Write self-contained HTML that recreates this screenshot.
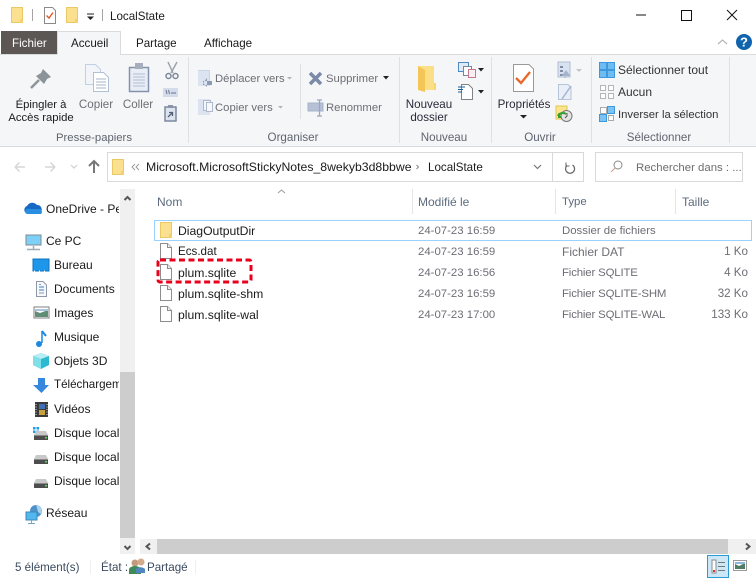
<!DOCTYPE html>
<html lang="fr"><head><meta charset="utf-8"><title>LocalState</title>
<style>
html,body{margin:0;padding:0;background:#fff}
#w{position:relative;width:756px;height:579px;overflow:hidden;background:#fff;font:11.6px/16px "Liberation Sans",sans-serif;color:#1a1a1a}
#w div,#w svg{position:absolute}
.t{white-space:nowrap;height:16px;margin-top:1px}
.g{color:#6d6d75}
.c{text-align:center}
.m{color:#5f6470}
.r{text-align:right;width:60px;left:688px;margin-top:0}
.n{font-size:12px;margin-top:0}
.f{font-size:12.2px;margin-top:0}
.d{font-size:11.4px;margin-top:0}
.s{font-size:11.4px;letter-spacing:-.15px;margin-top:0}
.b{font-size:11.3px;margin-top:1px}
</style></head><body><div id="w">
<svg width="756" height="579" style="left:0;top:0">
<defs>
<g id="fo"><path d="M.5.5H11.5V15.5H.5Z" fill="#fbe08f" stroke="#e9c964"/><path d="M9 12h3v4H9z" fill="#f3cf6d"/></g>
<g id="fi"><path d="M.5.5H7.5L11.5 4.5V15.5H.5Z" fill="#fff" stroke="#8d8d8d"/><path d="M7.5.5V4.5H11.5" fill="#eee" stroke="#8d8d8d"/></g>
<g id="hd"><path d="M2 5 4 1H14L16 5V10H2Z" fill="#c9c9c9"/><path d="M2 5H16V10H2Z" fill="#4d4d4d"/><path d="M2 5H16V6H2Z" fill="#8a8a8a"/><path d="M13 7h2v1.500h-2z" fill="#5fd35f"/></g>
</defs>
<!-- title bar -->
<use href="#fo" x="11" y="7"/>
<path d="M32.500 9V21" stroke="#a5a5a5"/>
<path d="M44.500 7.500H52.500L55.500 10.500V23.500H44.500Z" fill="#fff" stroke="#8a8a8a"/>
<path d="M46.500 15.500 49 18 53 12.500" fill="none" stroke="#e2592a" stroke-width="1.400"/>
<use href="#fo" x="66" y="7"/>
<path d="M87 14H94" stroke="#222" stroke-width="1"/><path d="M87 16.500H94L90.500 20Z" fill="#222"/>
<path d="M102.500 9V21" stroke="#a5a5a5"/>
<path d="M636 15H646" stroke="#111"/><path d="M681.500 10.500H691.500V20.500H681.500Z" fill="none" stroke="#111"/>
<path d="M727 10 737 20M737 10 727 20" stroke="#111" fill="none"/>
<!-- ribbon -->
<path d="M0 54.500H756" stroke="#dadbdc"/>
<rect x="0" y="55" width="756" height="91" fill="#f5f6f7"/>
<path d="M0 146.500H756" stroke="#dadbdc"/>
<rect x="1" y="31" width="57" height="23" fill="#5c5655"/>
<path d="M57.500 55V31.500H120.500V55" fill="#f5f6f7" stroke="#dadbdc"/>
<rect x="58" y="54" width="62" height="2" fill="#f5f6f7"/>
<path d="M188.500 57V143M399.500 57V143M491.500 57V143M591.500 57V143M729.500 57V143" stroke="#dfe0e1"/>
<path d="M300.500 64V119" stroke="#dfe0e1"/>
<path d="M718 44 722.500 40 727 44" fill="none" stroke="#b5b5b5" stroke-width="1.200"/>
<circle cx="744" cy="42" r="8" fill="#0f64ad"/>
<!-- pin -->
<path d="M43 69 51 77 47 79 44 84 36 76 41 73Z" fill="#8c9499"/><path d="M39 80 31 88" stroke="#8c9499" stroke-width="2.500"/>
<!-- copy -->
<path d="M85.500 64.500H95.500L100.500 69.500V84.500H85.500Z" fill="#f1f4f9" stroke="#c3cfe2"/>
<path d="M93.500 72.500H103.500L108.500 77.500V91.500H93.500Z" fill="#fff" stroke="#b2c0d6"/>
<path d="M96 79h10M96 82h10M96 85h10M96 88h10" stroke="#a7b4c9"/>
<!-- paste -->
<rect x="129.500" y="67.500" width="19" height="24" fill="#e8edf6" stroke="#8592ab" stroke-width="1.500"/>
<rect x="135" y="63" width="8" height="6" fill="#a6adbc"/>
<path d="M133 74h12M133 77h12M133 80h12M133 83h12M133 86h12" stroke="#b4c0d5"/>
<!-- scissors -->
<path d="M168 62 173 73M177 62 171 73" stroke="#9ea4ae" stroke-width="1.500"/><circle cx="168.500" cy="76" r="2.500" fill="none" stroke="#7e8899" stroke-width="1.500"/><circle cx="175.500" cy="76" r="2.500" fill="none" stroke="#7e8899" stroke-width="1.500"/>
<rect x="163" y="88" width="15" height="9" fill="#d4dceb"/><path d="M166 90l1 4M168.500 90l1 4M171 93h5" stroke="#68758c"/>
<rect x="165" y="107" width="11" height="14" fill="#dde3ee" stroke="#74829c" stroke-width="1.400"/><rect x="168" y="105" width="5" height="3" fill="#8b94a5"/><path d="M168 117 172 113M169 112.500H172.500V116" stroke="#55617a" fill="none" stroke-width="1.300"/>
<!-- move/copy -->
<rect x="198" y="70" width="12" height="16" fill="#dce4f2"/><path d="M198.500 70.500H209.500V86" fill="none" stroke="#c9d3e6"/><path d="M203 81H212V85H203M207 78 203 83 207 87Z" fill="#8d9bb2"/>
<path d="M287 77H292L289.500 79.500Z" fill="#b2b2b2"/>
<rect x="198" y="99" width="12" height="16" fill="#dce4f2"/><rect x="203.500" y="100.500" width="7" height="10" fill="#f2f5fa" stroke="#aeb9cd"/><rect x="206.500" y="102.500" width="6" height="9" fill="#f7f8fb" stroke="#aeb9cd"/>
<path d="M278 106H283L280.500 108.500Z" fill="#b2b2b2"/>
<!-- delete -->
<path d="M310 73 321 84M321 73 310 84" stroke="#7b8aa8" stroke-width="3.500"/>
<path d="M383 76H389L386 79.500Z" fill="#222"/>
<rect x="308" y="103" width="15" height="8" fill="#b6c1d6" stroke="#a7b2c8"/><path d="M319.500 100V116M317 100H322M317 116H322" stroke="#9aa7c0" stroke-width="1.300"/>
<!-- new folder -->
<path d="M418 66H434V90H418Z" fill="#fbdf87"/><path d="M418 66 425 70V92L418 90Z" fill="#f3c657"/><rect x="434" y="83" width="2" height="7" fill="#f7d56f"/>
<rect x="458.500" y="62.500" width="10" height="9" fill="#e3eaf5" stroke="#4b8bc2"/><rect x="463.500" y="66.500" width="8" height="9" fill="#fff" stroke="#7a8699"/><rect x="468.500" y="69.500" width="7" height="8" fill="#fbeef0" stroke="#c2788d"/>
<path d="M478 68H484L481 71.500Z M478 90H484L481 93.500Z" fill="#222"/>
<path d="M461.500 84.500H468.500L472.500 88.500V99.500H461.500Z" fill="#fff" stroke="#838383"/><path d="M458 87H465M458 89.500H463M458 92H462" stroke="#1d5c94"/>
<!-- properties -->
<path d="M513.500 64.500H529L533.500 69V91.500H513.500Z" fill="#fff" stroke="#9a9a9a"/><path d="M516 78 521 83 530 72" fill="none" stroke="#e9692c" stroke-width="2.400"/>
<path d="M520 115H527L523.500 118.500Z" fill="#222"/>
<rect x="558" y="62" width="12" height="15" fill="#d9e2f1" stroke="#b3c0d6"/><path d="M560 66h3v2h-3zM560 70h3v2h-3zM560 74h3v2h-3z" fill="#7f8da6"/><path d="M565 78V73M562.500 75.500 566 71 569.500 75.500Z" fill="#a6b3c9" stroke="#a6b3c9"/><path d="M576 69H582L579 72Z" fill="#c5c5c5"/>
<path d="M558.500 84.500H568L571 87.500V99.500H558.500Z" fill="#e9eef7" stroke="#b6c3d9"/><path d="M562 99 571 86" stroke="#a3b5d3" stroke-width="1.500"/>
<rect x="556" y="106" width="11" height="13" fill="#fbe48e" stroke="#e6c650"/><circle cx="566.500" cy="116" r="5.500" fill="#e4e4e4" stroke="#777"/><path d="M558 116a5 4 0 0 1 8-2" fill="none" stroke="#30a030" stroke-width="2"/><path d="M558 113v5h4" fill="#2f9e2f"/><path d="M567 113v3l-2 2" fill="none" stroke="#555"/>
<!-- select -->
<g fill="#6fbcf0" stroke="#3c99e0"><rect x="599.500" y="62.500" width="7" height="7"/><rect x="607.500" y="62.500" width="7" height="7"/><rect x="599.500" y="70.500" width="7" height="7"/><rect x="607.500" y="70.500" width="7" height="7"/></g>
<g fill="#fff" stroke="#b5b5b5"><rect x="600.500" y="85.500" width="5" height="5"/><rect x="608.500" y="85.500" width="5" height="5"/><rect x="600.500" y="93.500" width="5" height="5"/><rect x="608.500" y="93.500" width="5" height="5"/></g>
<rect x="600.500" y="107.500" width="6" height="6" fill="#fff" stroke="#aaa"/><rect x="607.500" y="106.500" width="7" height="7" fill="#7cc3f3" stroke="#3c99e0"/><rect x="599.500" y="114.500" width="7" height="7" fill="#7cc3f3" stroke="#3c99e0"/><rect x="608.500" y="115.500" width="5" height="5" fill="#fff" stroke="#aaa"/>
<!-- nav -->
<path d="M15 167H25M15 167 19.500 162.500M15 167 19.500 171.500M45 167H55M55 167 50.500 162.500M55 167 50.500 171.500" stroke="#d6d6d6" fill="none" stroke-width="1.500"/>
<path d="M71 165 74 168 77 165" stroke="#d0d0d0" fill="none" stroke-width="1.200"/>
<path d="M94 173V161M89 166 94 161 99 166" stroke="#777" fill="none" stroke-width="2"/>
<rect x="107.500" y="152.500" width="476" height="29" fill="#fff" stroke="#d9d9d9"/><path d="M552.500 152V182" stroke="#d9d9d9"/>
<rect x="595.500" y="152.500" width="147" height="29" fill="#fff" stroke="#d9d9d9"/>
<use href="#fo" x="112" y="159"/>
<path d="M135 164 132 167 135 170M139 164 136 167 139 170" fill="none" stroke="#9b9b9b"/>
<path d="M416.500 165 418.500 167 416.500 169" fill="none" stroke="#888"/>
<path d="M534 165 537.500 168.500 541 165" fill="none" stroke="#777" stroke-width="1.200"/>
<path d="M572.500 165a4.500 4.500 0 1 1-5.500 .5" fill="none" stroke="#666" stroke-width="1.200"/><path d="M566 162.500V166H569.500" fill="none" stroke="#666"/>
<circle cx="618" cy="165" r="4" fill="none" stroke="#8a8a8a"/><path d="M615 168 611 172" stroke="#c9a08a"/>
<!-- left icons -->
<path d="M26 213a4 4 0 0 1 1-7 6 6 0 0 1 10-1 4.500 4.500 0 0 1 3 8Z" fill="#1769c4"/><path d="M25 212a3.500 3.500 0 0 1 5-3h10a3 3 0 0 1 1 5H28a3 3 0 0 1-3-2Z" fill="#2a8fe0"/>
<rect x="26" y="235" width="15" height="10" fill="#7fd0f7" stroke="#7c8d99"/><path d="M33.500 246V249M27 249.500H40" stroke="#a0adb5" stroke-width="1.500"/>
<rect x="33" y="259" width="16" height="12" fill="#1e96ea" stroke="#0f72c0"/><path d="M34 271H48" stroke="#fff" stroke-dasharray="1 4"/>
<path d="M36.500 281.500H43L46.500 285V296.500H36.500Z" fill="#f6f8fb" stroke="#8e98a6"/><path d="M39 287H44M39 290H44" stroke="#3584c9"/><path d="M39 293H44M39 284.500h2" stroke="#8a9ab0"/>
<rect x="34" y="307" width="15" height="11" fill="#fff" stroke="#7f7f7f"/><path d="M35 315V311L40 313 48 310V317H35Z" fill="#5f8d75"/><path d="M35 309H48V311H35Z" fill="#a8c4dc"/>
<path d="M42 331V343" stroke="#1c88e0" stroke-width="1.500"/><path d="M42 331 46 336" stroke="#1c88e0" stroke-width="2"/><circle cx="39" cy="344" r="3" fill="#1c88e0"/>
<path d="M41 353 49 356V365L41 369 33 365V356Z" fill="#2db9cf"/><path d="M41 353 49 356 41 359 33 356Z" fill="#b7eef5"/><path d="M33 356 41 359V369L33 365Z" fill="#7fe0ea"/>
<path d="M38 378H45V385H49L41.500 393 33 385H38Z" fill="#3588dd"/>
<rect x="35" y="402" width="13" height="15" fill="#3a3a3a"/><rect x="39" y="404" width="6" height="5" fill="#3e6fb8"/><rect x="39" y="410" width="6" height="5" fill="#c9a13c"/><path d="M36 404v11M47 404v11" stroke="#ddd" stroke-dasharray="1 1.500"/>
<path d="M33 427h2.500v2.500H33zM36.500 427H39v2.500h-2.500zM33 430.500h2.500V433H33zM36.500 430.500H39V433h-2.500z" fill="#1d9cec"/>
<use href="#hd" x="32" y="430"/><use href="#hd" x="32" y="454"/><use href="#hd" x="32" y="478"/>
<circle cx="36" cy="511" r="6" fill="#4f92c9"/><path d="M36 505a6 6 0 0 1 5 9l-3-2-1-4Z" fill="#a7d3ef"/>
<rect x="26" y="512" width="11" height="8" fill="#53b7ef" stroke="#3a89bd"/><path d="M31.500 520V523M28 523.500H35" stroke="#7aa4c0"/>
<!-- scrollbars -->
<rect x="120" y="189" width="15" height="365" fill="#f0f0f0"/>
<rect x="120" y="372" width="15" height="166" fill="#cdcdcd"/>
<path d="M124.500 200 127.500 197 130.500 200" fill="none" stroke="#555" stroke-width="2"/>
<path d="M124.500 546 127.500 549 130.500 546" fill="none" stroke="#555" stroke-width="2"/>
<rect x="140" y="539" width="616" height="15" fill="#f0f0f0"/>
<rect x="157" y="539" width="571" height="15" fill="#cdcdcd"/>
<path d="M150 543.500 146.500 546.500 150 549.500" fill="none" stroke="#555" stroke-width="2"/>
<path d="M746 543.500 749.500 546.500 746 549.500" fill="none" stroke="#555" stroke-width="2"/>
<!-- header -->
<path d="M412.500 189V214M555.500 189V214M675.500 189V214" stroke="#e5e5e5"/>
<path d="M278 193 281.500 190 285 193" fill="none" stroke="#9b9b9b"/>
<!-- rows -->
<rect x="154.500" y="220.500" width="597" height="20" fill="#fff" stroke="#99d1ff"/>
<use href="#fo" x="160" y="222"/>
<use href="#fi" x="160" y="243"/><use href="#fi" x="160" y="264"/><use href="#fi" x="160" y="285"/><use href="#fi" x="160" y="306"/>
<rect x="158" y="260" width="93" height="22" rx="2" fill="none" stroke="#e8001c" stroke-width="3" stroke-dasharray="6 3.500"/>
<!-- status -->
<path d="M90.500 560V574M195.500 560V574" stroke="#efefef"/>
<circle cx="135" cy="563" r="3.500" fill="#c49a7c"/><path d="M129 574V570A6 4 0 0 1 141 570V574Z" fill="#3f8a58"/>
<circle cx="141" cy="562" r="3.500" fill="#d2ab8c"/><path d="M136 573V569A5.500 4 0 0 1 145 569V573Z" fill="#4f86bf"/>
<rect x="707.500" y="555.500" width="21" height="22" fill="#cce8f6" stroke="#2a9bd0"/>
<rect x="712" y="560" width="4" height="13" fill="#fff" stroke="#8a8a8a"/><path d="M718 562.500h7M718 566.500h7M718 570.500h7" stroke="#777"/><rect x="713" y="570" width="2" height="2" fill="#d33"/>
<rect x="733.500" y="560.500" width="13" height="10" fill="#fff" stroke="#9a9a9a"/><path d="M735 568V564L739 566 745 563V569H735Z" fill="#4f7d63"/><path d="M735 562H745V564H735Z" fill="#8fb5da"/>
<text x="744" y="46.500" text-anchor="middle" font-family="Liberation Sans,sans-serif" font-size="13" font-weight="700" fill="#fff">?</text>
</svg>

<div class="t" style="left:110px;top:8px">LocalState</div>
<div class="t" style="left:12px;top:35px;color:#fff">Fichier</div>
<div class="t" style="left:71px;top:35px">Accueil</div>
<div class="t" style="left:136px;top:35px">Partage</div>
<div class="t" style="left:204px;top:35px">Affichage</div>

<div class="t c b" style="left:1px;width:80px;top:96px">Épingler à</div>
<div class="t c b" style="left:1px;width:80px;top:109px">Accès rapide</div>
<div class="t c g" style="left:69px;width:54px;top:96px">Copier</div>
<div class="t c g" style="left:111px;width:54px;top:96px">Coller</div>
<div class="t c m b" style="left:29px;width:130px;top:129px">Presse-papiers</div>
<div class="t g b" style="left:215px;top:70px">Déplacer vers</div>
<div class="t g b" style="left:215px;top:99px">Copier vers</div>
<div class="t g b" style="left:326px;top:70px">Supprimer</div>
<div class="t g b" style="left:326px;top:99px">Renommer</div>
<div class="t c m" style="left:243px;width:100px;top:129px">Organiser</div>
<div class="t c" style="left:399px;width:60px;top:96px;color:#2a2a3a">Nouveau</div>
<div class="t c" style="left:399px;width:60px;top:109px;color:#2a2a3a">dossier</div>
<div class="t c m" style="left:414px;width:60px;top:129px">Nouveau</div>
<div class="t c" style="left:494px;width:60px;top:96px;color:#2a2a3a">Propriétés</div>
<div class="t c m" style="left:510px;width:60px;top:129px">Ouvrir</div>
<div class="t n" style="left:618px;top:62px;color:#333">Sélectionner tout</div>
<div class="t n" style="left:618px;top:84px;color:#333">Aucun</div>
<div class="t b" style="left:618px;top:106px;color:#333">Inverser la sélection</div>
<div class="t c m" style="left:609px;width:100px;top:129px">Sélectionner</div>

<div class="t" style="left:146px;top:158px;font-size:12.25px;margin-top:1px">Microsoft.MicrosoftStickyNotes_8wekyb3d8bbwe</div>
<div class="t" style="left:428px;top:159px">LocalState</div>
<div class="t d" style="left:636px;top:160px;color:#6d6d6d">Rechercher dans : ...</div>

<div class="t n" style="left:46px;top:201px;width:73px;overflow:hidden">OneDrive - Personal</div>
<div class="t n" style="left:46px;top:233px">Ce PC</div>
<div class="t n" style="left:54px;top:257px">Bureau</div>
<div class="t n" style="left:54px;top:281px">Documents</div>
<div class="t n" style="left:54px;top:305px">Images</div>
<div class="t n" style="left:54px;top:329px">Musique</div>
<div class="t n" style="left:54px;top:353px">Objets 3D</div>
<div class="t" style="left:54px;top:376px;width:65px;overflow:hidden">Téléchargements</div>
<div class="t n" style="left:54px;top:401px">Vidéos</div>
<div class="t n" style="left:54px;top:425px;width:65px;overflow:hidden">Disque local (C:)</div>
<div class="t n" style="left:54px;top:449px;width:65px;overflow:hidden">Disque local (D:)</div>
<div class="t n" style="left:54px;top:473px;width:65px;overflow:hidden">Disque local (E:)</div>
<div class="t n" style="left:46px;top:505px">Réseau</div>

<div class="t n" style="left:157px;top:194px;color:#5d6b7d">Nom</div>
<div class="t n" style="left:418px;top:194px;color:#5d6b7d">Modifié le</div>
<div class="t d" style="left:562px;top:194px;color:#5d6b7d">Type</div>
<div class="t n" style="left:682px;top:194px;color:#5d6b7d">Taille</div>

<div class="t f" style="left:178px;top:223px">DiagOutputDir</div>
<div class="t" style="left:178px;top:243px">Ecs.dat</div>
<div class="t f" style="left:178px;top:265px">plum.sqlite</div>
<div class="t f" style="left:178px;top:286px">plum.sqlite-shm</div>
<div class="t f" style="left:178px;top:307px">plum.sqlite-wal</div>

<div class="t g d" style="left:418px;top:223px">24-07-23 16:59</div>
<div class="t g d" style="left:418px;top:244px">24-07-23 16:59</div>
<div class="t g d" style="left:418px;top:265px">24-07-23 16:56</div>
<div class="t g d" style="left:418px;top:286px">24-07-23 16:59</div>
<div class="t g d" style="left:418px;top:307px">24-07-23 17:00</div>

<div class="t g d" style="left:562px;top:223px">Dossier de fichiers</div>
<div class="t g n" style="left:562px;top:244px">Fichier DAT</div>
<div class="t g s" style="left:562px;top:265px">Fichier SQLITE</div>
<div class="t g s" style="left:562px;top:286px">Fichier SQLITE-SHM</div>
<div class="t g s" style="left:562px;top:307px">Fichier SQLITE-WAL</div>

<div class="t g r" style="top:244px">1 Ko</div>
<div class="t g r" style="top:265px">4 Ko</div>
<div class="t g r" style="top:286px">32 Ko</div>
<div class="t g r" style="top:307px">133 Ko</div>

<div class="t" style="left:15px;top:559px;color:#3a4a5e">5 élément(s)</div>
<div class="t" style="left:101px;top:559px;color:#3a4a5e">État :</div>
<div class="t" style="left:147px;top:559px;color:#3a4a5e">Partagé</div>
</div></body></html>
